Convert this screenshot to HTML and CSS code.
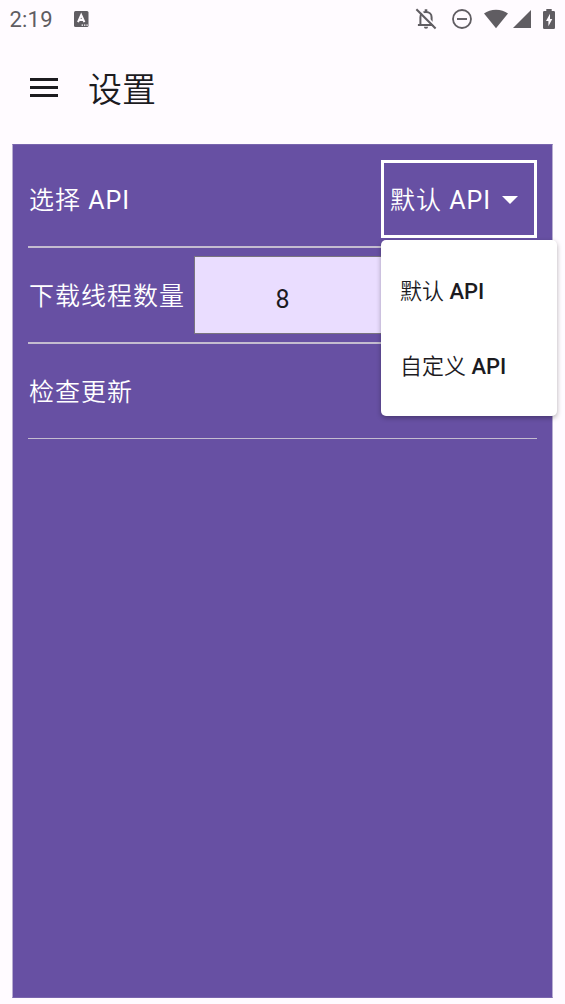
FILE: index.html
```html
<!DOCTYPE html>
<html lang="zh-CN">
<head>
  <meta charset="UTF-8" />
  <meta name="viewport" content="width=device-width, initial-scale=1.0"/>
  <title>设置</title>
  <link rel="stylesheet" href="styles.css">
</head>
<body>

  <!-- Status bar -->
  <div class="status-bar">
    <span class="clock">2:19</span>
    <svg class="icon-a" width="16" height="18" viewBox="0 0 16 18">
      <rect x="0" y="1" width="14.5" height="16" rx="1.5" fill="#605d62"/>
      <path d="M4 12.2L7.2 5L10.4 12.2M5.3 9.9H9.1" fill="none" stroke="#fffbff" stroke-width="2"/>
      <path d="M7.6 15.2h1.4M10 15.2h1.4M12.4 15.2h1.4" stroke="#fffbff" stroke-width="1.2"/>
    </svg>
    <div class="status-icons">
      <svg class="icon-bell" width="22" height="22" viewBox="0 0 22 22">
        <path d="M5.4 16.9V9.2C5.4 6.2 7.6 4 11 4S16.6 6.2 16.6 9.2V16.9M2.9 17H19.1" fill="none" stroke="#605d62" stroke-width="2"/>
        <path d="M9.7 1.2h2.6v3H9.7zM8.9 18.7h4.2a2.1 2.1 0 0 1-4.2 0z" fill="#605d62"/>
        <path d="M3.1 .4L22 19.3" stroke="#fffbff" stroke-width="2"/>
        <path d="M1.4 1.2L20.6 20.4" stroke="#605d62" stroke-width="2.1"/>
      </svg>
      <svg class="icon-dnd" width="20" height="20" viewBox="0 0 20 20">
        <circle cx="10" cy="10" r="9" fill="none" stroke="#605d62" stroke-width="1.8"/>
        <path d="M5 10H15" stroke="#605d62" stroke-width="1.9"/>
      </svg>
      <svg class="icon-wifi" width="24" height="20" viewBox="0 0 24 20">
        <path d="M12 19.2L0 4.6C3.2 2 7.4 .7 12 .7s8.8 1.3 12 3.9z" fill="#605d62"/>
      </svg>
      <svg class="icon-signal" width="18" height="18" viewBox="0 0 18 18">
        <path d="M0 18L18 0V18z" fill="#605d62"/>
      </svg>
      <svg class="icon-battery" width="12" height="20" viewBox="0 0 12 20">
        <path d="M1.3 2H3.3V0H8.7V2H10.7Q12 2 12 3.3V18.7Q12 20 10.7 20H1.3Q0 20 0 18.7V3.3Q0 2 1.3 2z" fill="#605d62"/>
        <path d="M7 4.7L3 12H5.4V17.3L9.3 10H7z" fill="#fffbff"/>
      </svg>
    </div>
  </div>

  <!-- App bar -->
  <div class="app-bar">
    <button class="menu-btn" aria-label="菜单">
      <span class="bar"></span>
      <span class="bar"></span>
      <span class="bar"></span>
    </button>
    <h1>设置</h1>
  </div>

  <!-- Settings -->
  <div class="panel">
    <div class="row">
      <span class="label"><span class="zh">选择</span> API</span>
      <div class="select">
        <span class="value"><span class="zh">默认</span> API</span>
        <svg class="caret" width="16" height="8" viewBox="0 0 16 8">
          <path d="M0 0H16L8 8z" fill="#fff"/>
        </svg>
        <div class="dropdown">
          <div class="option"><span class="zh">默认</span> API</div>
          <div class="option"><span class="zh">自定义</span> API</div>
        </div>
      </div>
    </div>
    <div class="row">
      <span class="label"><span class="zh">下载线程数量</span></span>
      <div class="number">8</div>
    </div>
    <div class="row last">
      <span class="label"><span class="zh">检查更新</span></span>
    </div>
  </div>

</body>
</html>
```
FILE: styles.css
```css
* { box-sizing: border-box; margin: 0; padding: 0; }
body {
  font-family: Roboto, "Noto Sans CJK SC", sans-serif;
  background: #fffbff;
  color: #1c1b1f;
  height: 1004px;
  overflow: hidden;
}
svg { display: block; }
.zh { font-weight: 350; }

.status-bar {
  display: flex;
  align-items: center;
  height: 38px;
  padding: 0 10px;
  color: #605d62;
}
.clock { width: 64px; font-size: 22px; letter-spacing: 0.2px; margin-left: -0.5px; padding-top: 1px; }
.status-icons { display: flex; align-items: center; margin-left: auto; }
.icon-dnd { margin-left: 15px; }
.icon-wifi { margin-left: 12px; }
.icon-signal { margin-left: 5px; }
.icon-battery { margin-left: 12px; }

.app-bar {
  display: flex;
  align-items: center;
  height: 100px;
  padding-left: 30px;
  margin-bottom: 6px;
}
.menu-btn {
  display: flex;
  flex-direction: column;
  gap: 5px;
  width: 28px;
  margin-bottom: 1px;
  border: none;
  background: none;
}
.bar { height: 3px; background: #1c1b1f; }
h1 { margin-left: 30px; padding-top: 4px; font-size: 34px; font-weight: 350; line-height: 48px; }

.panel {
  height: 854px;
  margin: 0 12px;
  padding: 7px 15px;
  background: #6750a3;
  border: 1px solid #b8add1;
  border-top-color: #7965ae;
  border-bottom-color: #7965ae;
}
.row {
  display: flex;
  align-items: center;
  height: 96px;
  border-bottom: 2px solid #c4bcd0;
  color: #fff;
}
.row.last { height: 95px; border-bottom-width: 1px; }
.label { margin-left: 1px; padding-bottom: 2px; font-size: 25px; letter-spacing: 1px; white-space: nowrap; }

.select {
  position: relative;
  display: flex;
  align-items: center;
  width: 156px;
  height: 78px;
  margin-left: auto;
  padding-left: 6px;
  border: 3px solid #fff;
}
.value { padding-bottom: 2px; font-size: 25px; letter-spacing: 1px; white-space: nowrap; }
.caret { margin-left: 11px; margin-top: 1px; }

/* opens below the select */
.dropdown {
  position: absolute;
  top: 77px;
  left: -3px;
  z-index: 1;
  width: 176px;
  height: 176px;
  padding: 14px 0;
  background: #fff;
  border-radius: 5px;
  box-shadow: 0 2px 5px rgba(0,0,0,0.3);
}
.option {
  height: 75px;
  padding-left: 19px;
  font-size: 22px;
  font-weight: 500;
  line-height: 76px;
  color: #1c1b1f;
}

.number {
  flex: 1;
  height: 78px;
  margin-left: 9px;
  padding-right: 166px;
  background: #eaddff;
  border: 1px solid #79747e;
  color: #1c1b1f;
  font-size: 25px;
  line-height: 85px;
  text-align: center;
}
```
